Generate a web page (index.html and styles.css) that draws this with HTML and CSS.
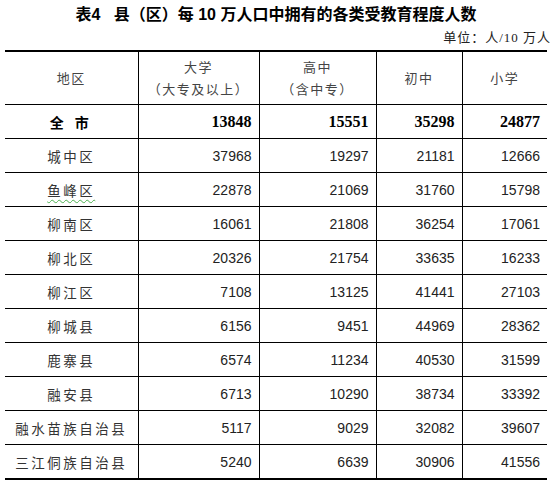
FILE: index.html
```html
<!DOCTYPE html>
<html lang="zh-CN">
<head>
<meta charset="utf-8">
<title>表4</title>
<link rel="stylesheet" href="styles.css">
</head>
<body>
<div class="page">
  <div class="title">表4&nbsp;&nbsp;&nbsp;县（区）每 10 万人口中拥有的各类受教育程度人数</div>
  <div class="unit">单位：人/10 万人</div>
  <table class="tbl">
    <colgroup>
      <col class="c1"><col class="c2"><col class="c3"><col class="c4"><col class="c5">
    </colgroup>
    <thead>
      <tr>
        <th>地区</th>
        <th>大学<br>（大专及以上）</th>
        <th>高中<br>（含中专）</th>
        <th>初中</th>
        <th>小学</th>
      </tr>
    </thead>
    <tbody>
      <tr class="total"><td class="name">全&nbsp;市</td><td>13848</td><td>15551</td><td>35298</td><td>24877</td></tr>
      <tr><td class="name">城中区</td><td>37968</td><td>19297</td><td>21181</td><td>12666</td></tr>
      <tr><td class="name"><span class="spell">鱼峰区</span></td><td>22878</td><td>21069</td><td>31760</td><td>15798</td></tr>
      <tr><td class="name">柳南区</td><td>16061</td><td>21808</td><td>36254</td><td>17061</td></tr>
      <tr><td class="name">柳北区</td><td>20326</td><td>21754</td><td>33635</td><td>16233</td></tr>
      <tr><td class="name">柳江区</td><td>7108</td><td>13125</td><td>41441</td><td>27103</td></tr>
      <tr><td class="name">柳城县</td><td>6156</td><td>9451</td><td>44969</td><td>28362</td></tr>
      <tr><td class="name">鹿寨县</td><td>6574</td><td>11234</td><td>40530</td><td>31599</td></tr>
      <tr><td class="name">融安县</td><td>6713</td><td>10290</td><td>38734</td><td>33392</td></tr>
      <tr><td class="name">融水苗族自治县</td><td>5117</td><td>9029</td><td>32082</td><td>39607</td></tr>
      <tr><td class="name">三江侗族自治县</td><td>5240</td><td>6639</td><td>30906</td><td>41556</td></tr>
    </tbody>
  </table>
</div>
</body>
</html>
```

FILE: styles.css
```css
html, body {
  margin: 0;
  padding: 0;
  background: #fff;
}
.page {
  padding-left: 5px;
  width: 542px;
  font-family: "Liberation Sans", "Noto Sans CJK SC", sans-serif;
  color: #111;
}
.title {
  height: 29px;
  line-height: 29px;
  text-align: center;
  font-family: "Liberation Sans", "Noto Sans CJK SC", sans-serif;
  font-weight: bold;
  font-size: 16px;
  color: #000;
}
.unit {
  height: 21px;
  line-height: 18px;
  text-align: right;
  margin-right: -4px;
  font-family: "Liberation Serif", "Noto Sans CJK SC", serif;
  font-size: 13px;
  letter-spacing: 1px;
  color: #222;
}
.tbl {
  width: 542px;
  border-collapse: collapse;
  table-layout: fixed;
  border-top: 2px solid #000;
  border-bottom: 2px solid #000;
}
.c1 { width: 133px; }
.c2 { width: 121px; }
.c3 { width: 117px; }
.c4 { width: 86px; }
.c5 { width: 85px; }
.tbl th,
.tbl td {
  border-left: 1px solid #000;
  border-bottom: 1px solid #000;
  padding: 0;
}
.tbl th:first-child,
.tbl td:first-child {
  border-left: none;
}
.tbl tbody tr:last-child td {
  border-bottom: none;
}
.tbl th {
  height: 52px;
  font-family: "Noto Sans CJK SC", sans-serif;
  font-weight: normal;
  font-size: 13px;
  line-height: 22px;
  letter-spacing: 1.5px;
  color: #444;
  text-align: center;
  vertical-align: middle;
}
.tbl td {
  height: 33px;
  text-align: right;
  padding-right: 7px;
  font-size: 14px;
  color: #222;
  vertical-align: middle;
}
.tbl td.name {
  text-align: center;
  padding-right: 0;
  font-family: "Noto Sans CJK SC", sans-serif;
  font-size: 13.5px;
  letter-spacing: 2.5px;
  color: #333;
}
.tbl tr.total td {
  font-family: "Liberation Serif", serif;
  font-weight: bold;
  font-size: 16px;
  color: #000;
}
.tbl tr.total td.name {
  font-family: "Noto Sans CJK SC", sans-serif;
  font-size: 14px;
  letter-spacing: 4px;
}
.spell {
  text-decoration: underline wavy #4caf50;
  text-decoration-thickness: 1px;
  text-underline-offset: 3px;
}
```
